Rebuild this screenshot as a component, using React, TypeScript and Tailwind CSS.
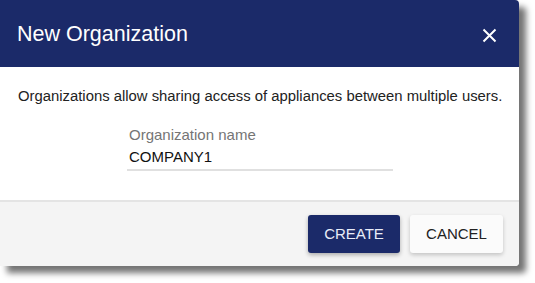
export default function App() {
  return (
    <div className="w-[535px] h-[283px] bg-white" style={{ fontFamily: '"Liberation Sans", Arial, sans-serif' }}>
      <div className="w-[519px] h-[266px] flex flex-col rounded-r-[4px] overflow-hidden shadow-[7px_7px_6px_rgba(0,0,0,0.55)]">
        <div className="h-[67px] bg-[#1b2a69] flex items-start justify-between pl-[17px] pr-[22px]">
          <span className="text-white text-[21.5px] leading-[26px] mt-[21px]">New Organization</span>
          <svg width="15" height="15" viewBox="0 0 15 15" className="mt-[28px]">
            <path d="M1.5 1.5 L13.5 13.5 M13.5 1.5 L1.5 13.5" stroke="white" strokeWidth="2" />
          </svg>
        </div>
        <div className="h-[133px] bg-white flex flex-col">
          <p className="text-[14.85px] text-[#222] pl-[18px] pt-[20px] leading-[18px]">
            Organizations allow sharing access of appliances between multiple users.
          </p>
          <div className="ml-[127px] mt-[19px] w-[266px] border-b-2 border-[#e0e0e0] pl-[2px] pb-[1px]">
            <div className="text-[15px] text-[#757575] leading-[22px]">Organization name</div>
            <div className="text-[15px] text-[#111] leading-[22px]">COMPANY1</div>
          </div>
        </div>
        <div className="flex-1 bg-[#f4f4f4] border-t-2 border-[#e4e4e4] flex justify-end items-start pt-[13px] pr-[16px] gap-[10px]">
          <button className="w-[92px] h-[38px] bg-[#1b2a69] text-[#e8ecf8] text-[15px] rounded-[3px] shadow-[0_2px_4px_rgba(0,0,0,0.3)]">
            CREATE
          </button>
          <button className="w-[93px] h-[38px] bg-[#fbfbfb] text-[#222] text-[15px] rounded-[3px] shadow-[0_2px_4px_rgba(0,0,0,0.2)]">
            CANCEL
          </button>
        </div>
      </div>
    </div>
  );
}
